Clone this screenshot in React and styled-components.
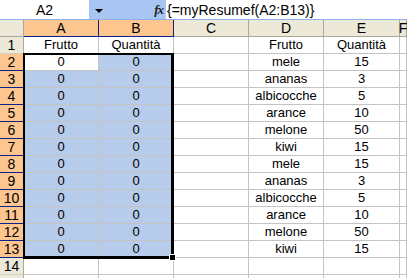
import React from "react";
import styled, { createGlobalStyle } from "styled-components";

const Global = createGlobalStyle`
  html, body {
    margin: 0;
    padding: 0;
    background: #fff;
    overflow: hidden;
  }
  body {
    font-family: "Liberation Sans", Arial, sans-serif;
  }
`;

const Page = styled.div`
  width: 407px;
  height: 278px;
  overflow: hidden;
  display: flex;
  flex-direction: column;
`;

const FormulaBar = styled.div`
  display: flex;
  height: 20px;
  flex-shrink: 0;
  background: #a9c5f1;
  border-bottom: 1px solid #8fb0e6;
  box-sizing: border-box;
`;

const NameBox = styled.div`
  width: 89px;
  background: #fff;
  display: flex;
  align-items: center;
  justify-content: center;
  font-size: 14px;
  color: #000;
`;

const DropButton = styled.div`
  width: 20px;
  display: flex;
  align-items: center;
  justify-content: center;

  &::after {
    content: "";
    border-left: 4px solid transparent;
    border-right: 4px solid transparent;
    border-top: 4px solid #000;
    margin-top: 2px;
  }
`;

const FxLabel = styled.div`
  width: 57px;
  display: flex;
  align-items: center;
  justify-content: flex-end;
  padding-right: 3px;
  box-sizing: border-box;
  font-family: "Liberation Serif", "Times New Roman", serif;
  font-style: italic;
  font-weight: bold;
  font-size: 13px;
  color: #222;
  letter-spacing: -1px;
`;

const FormulaInput = styled.div`
  flex: 1;
  background: #fff;
  display: flex;
  align-items: center;
  padding-left: 1px;
  font-size: 14px;
  color: #000;
  white-space: nowrap;
`;

const Sheet = styled.div`
  position: relative;
  flex: 1;
`;

const Row = styled.div`
  display: flex;
  height: 17px;
`;

const RowHead = styled.div`
  width: 24px;
  flex-shrink: 0;
  box-sizing: border-box;
  display: flex;
  align-items: center;
  justify-content: center;
  font-size: 14px;
  color: #000;
  background: ${(p) => (p.$sel ? "#fcc68e" : "#ece9d8")};
  border-right: 1px solid ${(p) => (p.$sel ? "#10208a" : "#aca899")};
  border-bottom: 1px solid ${(p) => (p.$sel ? "#10208a" : "#d4d0c4")};
`;

const Corner = styled(RowHead)`
  background: #ece9d8;
  border-right: 1px solid #aca899;
  border-bottom: 1px solid #aca899;
`;

const ColHead = styled.div`
  width: ${(p) => p.$w}px;
  flex: ${(p) => (p.$w ? "none" : "1")};
  box-sizing: border-box;
  display: flex;
  align-items: center;
  justify-content: center;
  font-size: 14px;
  color: #000;
  background: ${(p) => (p.$sel ? "#fcc68e" : "#ece9d8")};
  border-right: 1px solid ${(p) => (p.$sel ? "#10208a" : "#aca899")};
  border-bottom: 1px solid ${(p) => (p.$sel ? "#10208a" : "#aca899")};
`;

const Cell = styled.div`
  width: ${(p) => p.$w}px;
  flex: ${(p) => (p.$w ? "none" : "1")};
  box-sizing: border-box;
  display: flex;
  align-items: flex-end;
  justify-content: center;
  padding-bottom: 1px;
  font-size: 13px;
  line-height: 14px;
  color: #000;
  white-space: nowrap;
  background: ${(p) => (p.$sel ? "#b7cbea" : "#fff")};
  border-right: 1px solid #c4c4c4;
  border-bottom: 1px solid #c4c4c4;
`;

const SelectionFrame = styled.div`
  position: absolute;
  left: 23px;
  top: 33px;
  width: 151px;
  height: 206px;
  box-sizing: border-box;
  border: 2px solid #000;
  border-right-width: 3px;
  border-bottom-width: 3px;
  pointer-events: none;
`;

const FillHandle = styled.div`
  position: absolute;
  right: -5px;
  bottom: -5px;
  width: 5px;
  height: 5px;
  background: #000;
  border: 1px solid #fff;
`;

const widths = [75, 75, 75, 75, 76, 0];
const letters = ["A", "B", "C", "D", "E", "F"];

const fruits = [
  ["mele", 15],
  ["ananas", 3],
  ["albicocche", 5],
  ["arance", 10],
  ["melone", 50],
  ["kiwi", 15],
];

const rows = [
  ["Frutto", "Quantità", "", "Frutto", "Quantità", ""],
  ...[...fruits, ...fruits].map(([name, qty]) => ["0", "0", "", name, String(qty), ""]),
  ["", "", "", "", "", ""],
  ["", "", "", "", "", ""],
];

export default function App() {
  return (
    <Page>
      <Global />
      <FormulaBar>
        <NameBox>A2</NameBox>
        <DropButton />
        <FxLabel>fx</FxLabel>
        <FormulaInput>{"{=myResumef(A2:B13)}"}</FormulaInput>
      </FormulaBar>
      <Sheet>
        <Row>
          <Corner />
          {letters.map((l, i) => (
            <ColHead key={l} $w={widths[i]} $sel={i < 2}>
              {l}
            </ColHead>
          ))}
        </Row>
        {rows.map((cells, r) => {
          const n = r + 1;
          const inSel = n >= 2 && n <= 13;
          return (
            <Row key={n}>
              <RowHead $sel={inSel}>{n <= 14 ? n : ""}</RowHead>
              {cells.map((v, c) => (
                <Cell key={c} $w={widths[c]} $sel={inSel && c < 2 && !(n === 2 && c === 0)}>
                  {v}
                </Cell>
              ))}
            </Row>
          );
        })}
        <SelectionFrame>
          <FillHandle />
        </SelectionFrame>
      </Sheet>
    </Page>
  );
}
